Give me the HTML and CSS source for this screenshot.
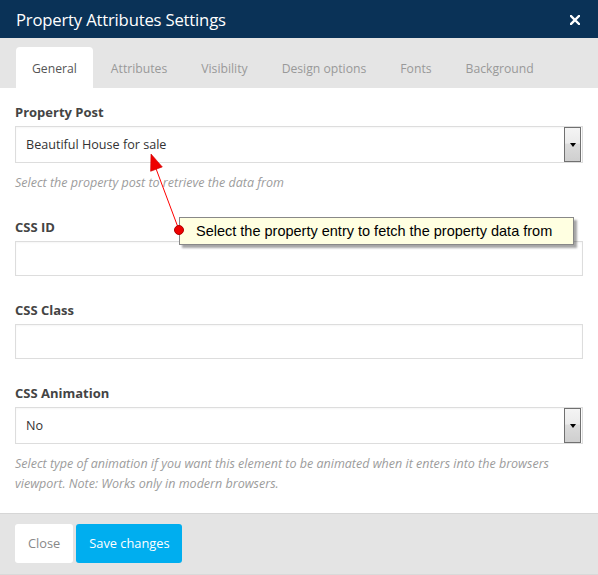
FILE: index.html
```html
<!DOCTYPE html>
<html>
<head>
<meta charset="utf-8">
<link rel="stylesheet" href="styles.css">
</head>
<body>
<div class="modal">
  <div class="header">
    <span class="title">Property Attributes Settings</span>
    <svg class="close-x" width="10" height="10" viewBox="0 0 10 10"><path d="M1 1L9 9M9 1L1 9" stroke="#fff" stroke-width="2.4" stroke-linecap="square"/></svg>
  </div>
  <div class="tabs">
    <div class="tab active">General</div>
    <div class="tab">Attributes</div>
    <div class="tab">Visibility</div>
    <div class="tab">Design options</div>
    <div class="tab">Fonts</div>
    <div class="tab">Background</div>
  </div>
  <div class="content">
    <div class="group">
      <div class="label">Property Post</div>
      <div class="select"><span>Beautiful House for sale</span><span class="select-btn"><i class="tri"></i></span></div>
      <div class="help">Select the property post to retrieve the data from</div>
    </div>
    <div class="group">
      <div class="label">CSS ID</div>
      <div class="input"></div>
    </div>
    <div class="group">
      <div class="label">CSS Class</div>
      <div class="input"></div>
    </div>
    <div class="group">
      <div class="label">CSS Animation</div>
      <div class="select"><span>No</span><span class="select-btn"><i class="tri"></i></span></div>
      <div class="help">Select type of animation if you want this element to be animated when it enters into the browsers viewport. Note: Works only in modern browsers.</div>
    </div>
  </div>
  <div class="footer">
    <div class="btn btn-close">Close</div>
    <div class="btn btn-save">Save changes</div>
  </div>
  <svg class="arrow" width="598" height="575" viewBox="0 0 598 575">
    <line x1="179" y1="230" x2="155" y2="166" stroke="#ff0000" stroke-width="1"/>
    <polygon points="151,154 150.6,171.3 162.3,166.9" fill="#ee0000" stroke="#cc0000" stroke-width="0.6"/>
  </svg>
  <div class="tooltip">Select the property entry to fetch the property data from</div>
  <div class="dot"></div>
</div>
</body>
</html>
```

FILE: styles.css
```css
html, body {
  margin: 0;
  padding: 0;
}
body {
  width: 598px;
  height: 575px;
  overflow: hidden;
  font-family: "Open Sans", sans-serif;
  background: #fff;
}
.modal {
  position: relative;
  width: 598px;
  height: 575px;
  display: flex;
  flex-direction: column;
}
.header {
  height: 38px;
  background: #0a3257;
  display: flex;
  align-items: center;
  justify-content: space-between;
  padding: 0 18px 0 16px;
  flex: none;
}
.title {
  color: #fff;
  font-size: 16.7px;
  letter-spacing: -0.2px;
}
.close-x {
  display: block;
  margin-top: 2px;
}
.tabs {
  background: #e5e5e5;
  padding: 9px 16px 0;
  height: 41px;
  display: flex;
  flex: none;
}
.tab {
  padding: 0 16px;
  margin-right: 2px;
  line-height: 43px;
  font-size: 12.2px;
  color: #999;
  border-radius: 4px 4px 0 0;
  white-space: nowrap;
}
.tab.active {
  background: #fff;
  color: #555;
}
.content {
  flex: 1;
  min-height: 0;
  padding: 15px 15px 0;
}
.group {
  margin-bottom: 25px;
}
.group:last-child {
  margin-bottom: 0;
}
.label {
  font-size: 13px;
  font-weight: 700;
  color: #444;
  line-height: 18px;
  margin-bottom: 5px;
}
.select, .input {
  box-sizing: border-box;
  border: 1px solid #ddd;
  box-shadow: inset 0 1px 2px rgba(0,0,0,0.04);
  background: #fff;
}
.select {
  height: 37px;
  display: flex;
  align-items: center;
  justify-content: space-between;
  padding: 0 1px 0 10px;
  font-size: 12.6px;
  color: #333;
}
.input {
  height: 35px;
}
.select-btn {
  box-sizing: border-box;
  width: 17px;
  height: 35px;
  border: 1px solid #707070;
  background: linear-gradient(#f4f4f4 0%, #ebebeb 45%, #dbdbdb 50%, #cfcfcf 100%);
  display: flex;
  align-items: center;
  justify-content: center;
}
.tri {
  width: 0;
  height: 0;
  border-left: 3.5px solid transparent;
  border-right: 3.5px solid transparent;
  border-top: 4px solid #000;
}
.help {
  margin-top: 10px;
  font-size: 12.5px;
  font-style: italic;
  color: #9c9c9c;
  line-height: 20px;
}
.footer {
  flex: none;
  background: #e4e4e4;
  border-top: 1px solid #d6d6d6;
  border-bottom: 1px solid #d9d9d9;
  padding: 10px 15px 11px;
  display: flex;
  gap: 3px;
}
.btn {
  height: 39px;
  line-height: 39px;
  font-size: 12.8px;
  border-radius: 3px;
  white-space: nowrap;
  padding: 0 13px;
}
.btn-close {
  background: #fff;
  color: #888;
}
.btn-save {
  background: #00aeef;
  color: #fff;
}
.arrow {
  position: absolute;
  left: 0;
  top: 0;
  pointer-events: none;
}
.tooltip {
  position: absolute;
  left: 179px;
  top: 217px;
  width: 377px;
  height: 26px;
  padding-left: 16px;
  box-sizing: content-box;
  background: #ffffe1;
  border: 1px solid #888;
  box-shadow: 3px 3px 2px rgba(0,0,0,0.35);
  font-family: "Liberation Sans", Arial, sans-serif;
  font-size: 14.5px;
  line-height: 26px;
  color: #000;
  white-space: nowrap;
}
.dot {
  position: absolute;
  left: 174px;
  top: 225px;
  width: 10px;
  height: 10px;
  border-radius: 50%;
  background: #ee0000;
  border: 0.5px solid #b00000;
  box-sizing: border-box;
}
```
